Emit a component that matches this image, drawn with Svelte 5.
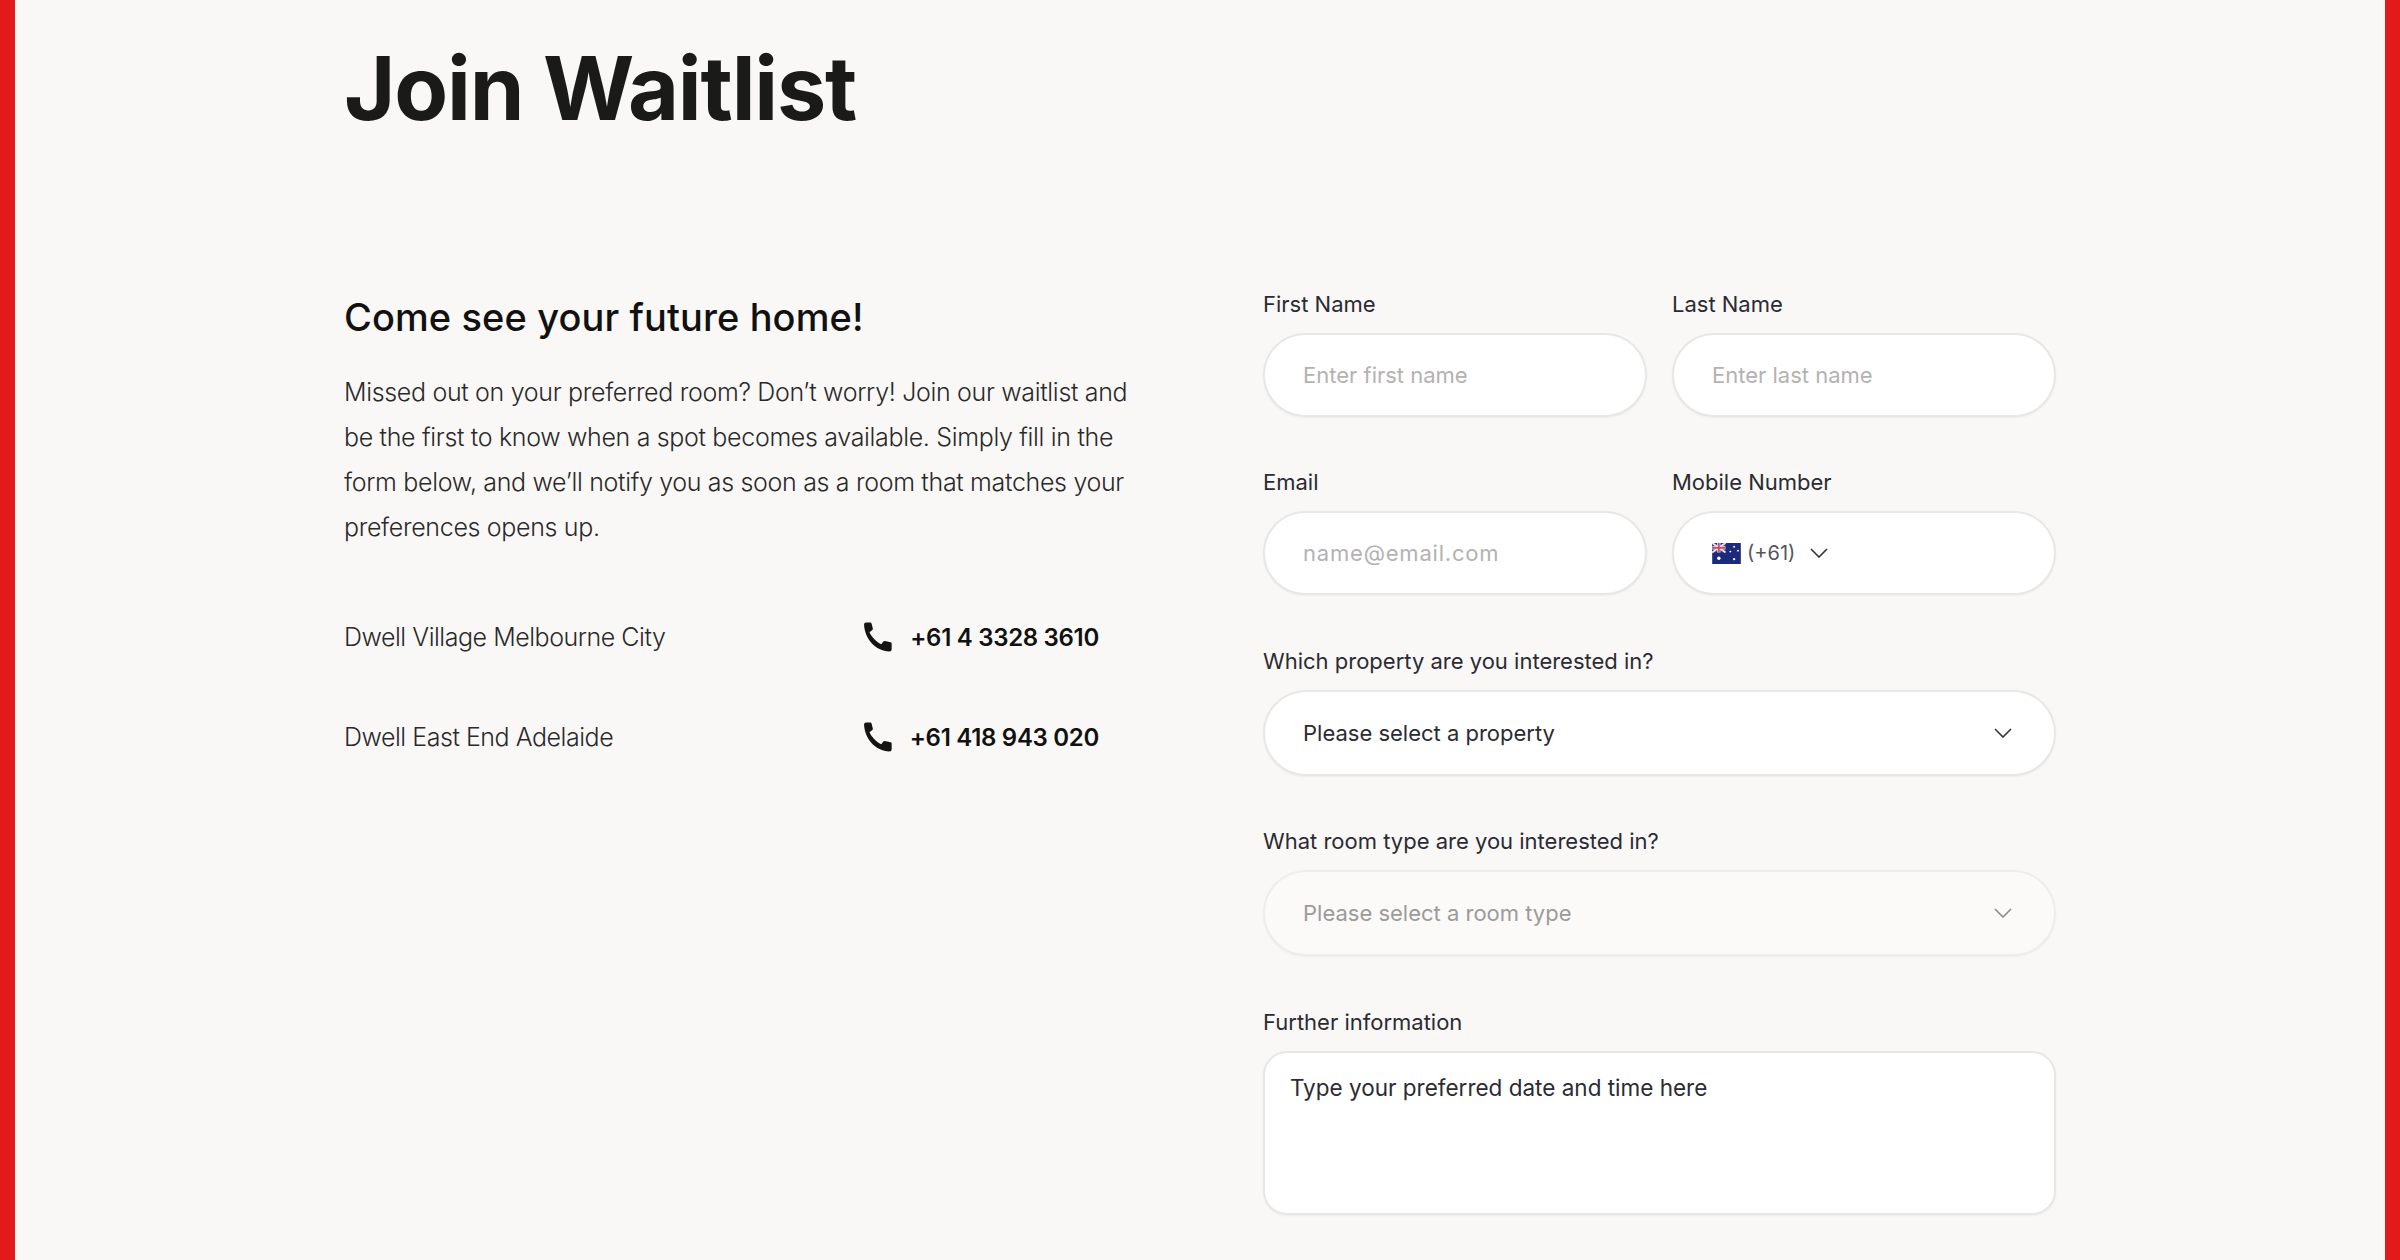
<script>
  const contacts = [
    { name: 'Dwell Village Melbourne City', phone: '+61 4 3328 3610' },
    { name: 'Dwell East End Adelaide', phone: '+61 418 943 020' }
  ];
</script>

<div class="page">
  <h1>Join Waitlist</h1>
  <div class="columns">
    <section class="info">
      <h2>Come see your future home!</h2>
      <p>Missed out on your preferred room? Don’t worry! Join our waitlist and<br />be the first to know when a spot becomes available. Simply fill in the<br />form below, and we’ll notify you as soon as a room that matches your<br />preferences opens up.</p>
      <ul class="contacts">
        {#each contacts as c}
          <li>
            <span class="name">{c.name}</span>
            <span class="phone">
              <svg viewBox="0 0 28 29" width="29" height="30" aria-hidden="true">
                <path d="M1 2.5Q1 .5 3 .5H7Q8 .5 8.3 1.6L9.5 6.3Q9.7 7.2 9 7.8L6.3 9.8C8.2 14.2 12.6 18.8 17.6 21.4L19.7 18.9Q20.3 18.2 21.2 18.4L26.6 19.5Q27.7 19.8 27.7 20.8V26.4Q27.7 28.6 25.5 28.6C12 28 1.6 16.6 1 2.5Z" />
              </svg>
              <b>{c.phone}</b>
            </span>
          </li>
        {/each}
      </ul>
    </section>

    <form class="form">
      <div class="field">
        <label for="first">First Name</label>
        <input id="first" placeholder="Enter first name" />
      </div>
      <div class="field">
        <label for="last">Last Name</label>
        <input id="last" placeholder="Enter last name" />
      </div>
      <div class="field">
        <label for="email">Email</label>
        <input id="email" class="email" placeholder="name@email.com" />
      </div>
      <div class="field">
        <span class="label">Mobile Number</span>
        <div class="control phone-input">
          <svg class="flag" viewBox="0 0 30 22" width="29" height="21" aria-hidden="true">
            <rect width="30" height="22" fill="#1b2a7b" />
            <rect width="14" height="10" fill="#2b3a86" />
            <path d="M0 0L14 10M14 0L0 10" stroke="#e9e4ea" stroke-width="2" />
            <path d="M7 0V10M0 5H14" stroke="#e9e4ea" stroke-width="3.4" />
            <path d="M7 0V10M0 5H14" stroke="#d8435c" stroke-width="1.8" />
            <circle cx="7" cy="16" r="1.8" fill="#fff" />
            <circle cx="23" cy="4" r="1" fill="#fff" />
            <circle cx="19" cy="9" r="1" fill="#fff" />
            <circle cx="27" cy="8" r="1" fill="#fff" />
            <circle cx="23" cy="17" r="1.2" fill="#fff" />
          </svg>
          <span class="code">(+61)</span>
          <svg class="chev" viewBox="0 0 18 10" width="18" height="10" aria-hidden="true"><path d="M1 1L9 9L17 1" /></svg>
        </div>
      </div>
      <div class="field wide">
        <span class="label">Which property are you interested in?</span>
        <div class="control select">
          <span>Please select a property</span>
          <svg class="chev" viewBox="0 0 18 10" width="18" height="10" aria-hidden="true"><path d="M1 1L9 9L17 1" /></svg>
        </div>
      </div>
      <div class="field wide">
        <span class="label">What room type are you interested in?</span>
        <div class="control select disabled">
          <span>Please select a room type</span>
          <svg class="chev" viewBox="0 0 18 10" width="18" height="10" aria-hidden="true"><path d="M1 1L9 9L17 1" /></svg>
        </div>
      </div>
      <div class="field wide">
        <label for="info">Further information</label>
        <textarea id="info">Type your preferred date and time here</textarea>
      </div>
    </form>
  </div>
</div>

<style>
  :global(body) {
    margin: 0;
    background: #faf8f7;
  }
  .page {
    box-sizing: border-box;
    height: 1260px;
    overflow: hidden;
    background: #faf8f7;
    border-left: 15px solid #e21a1a;
    border-right: 15px solid #e21a1a;
    padding: 28px 0 0 329px;
    font-family: Inter, "Liberation Sans", sans-serif;
    color: #1a1a1a;
  }
  h1 {
    margin: 0;
    font-size: 88px;
    line-height: 120px;
    font-weight: 700;
    letter-spacing: -1.2px;
    color: #1a1a18;
  }
  .columns {
    display: grid;
    grid-template-columns: 919px 793px;
    margin-top: 141px;
  }
  .info {
    padding-top: 6px;
  }
  h2 {
    margin: 0;
    font-size: 38px;
    line-height: 44px;
    font-weight: 500;
    letter-spacing: 0.1px;
    color: #111;
  }
  p {
    margin: 31px 0 0;
    font-size: 25px;
    line-height: 45px;
    font-weight: 300;
    letter-spacing: -0.33px;
    color: #2a2a2a;
    white-space: nowrap;
  }
  .contacts {
    list-style: none;
    margin: 62px 0 0;
    padding: 0;
    width: 755px;
    display: grid;
    gap: 50px;
  }
  .contacts li {
    display: flex;
    justify-content: space-between;
    align-items: center;
    height: 50px;
  }
  .name {
    font-size: 25px;
    font-weight: 300;
    letter-spacing: -0.47px;
    color: #2a2a2a;
  }
  .phone {
    display: flex;
    align-items: center;
    gap: 18px;
  }
  .phone svg path {
    fill: #141414;
  }
  .phone b {
    font-size: 24px;
    font-weight: 600;
    letter-spacing: -0.3px;
    color: #111;
  }
  .form {
    display: grid;
    grid-template-columns: 1fr 1fr;
    column-gap: 25px;
    row-gap: 50.4px;
  }
  .wide {
    grid-column: 1 / -1;
  }
  .field {
    display: flex;
    flex-direction: column;
    gap: 14px;
  }
  label,
  .label {
    font-size: 22px;
    line-height: 30px;
    font-weight: 400;
    color: #2b2b33;
  }
  input,
  .control,
  textarea {
    box-sizing: border-box;
    width: 100%;
    margin: 0;
    background: #fff;
    border: 2px solid #e9e7e5;
    border-radius: 43px;
    box-shadow: 0 1px 2px rgba(0, 0, 0, 0.05);
    font-family: inherit;
    font-size: 22px;
    color: #2b2b33;
    outline: none;
  }
  input {
    height: 84px;
    padding: 0 38px;
  }
  input::placeholder {
    color: #b4b2b2;
    opacity: 1;
  }
  .email::placeholder {
    letter-spacing: 0.8px;
  }
  .control {
    display: flex;
    align-items: center;
  }
  .phone-input {
    height: 84px;
    padding: 0 38px;
  }
  .flag {
    flex: none;
  }
  .code {
    margin-left: 6px;
    color: #55555e;
    font-size: 20px;
  }
  .phone-input .chev {
    margin-left: 15px;
  }
  .select {
    height: 86px;
    padding: 0 42px 0 38px;
    justify-content: space-between;
  }
  .chev path {
    fill: none;
    stroke: #33333a;
    stroke-width: 1.6;
  }
  .disabled {
    background: #fbfaf8;
    border-color: #efedeb;
    color: #9b9b9b;
  }
  .disabled .chev path {
    stroke: #8a8a8a;
  }
  textarea {
    display: block;
    height: 164px;
    padding: 20px 25px;
    border-radius: 24px;
    font-size: 22.5px;
    line-height: 30px;
    resize: none;
  }
</style>
